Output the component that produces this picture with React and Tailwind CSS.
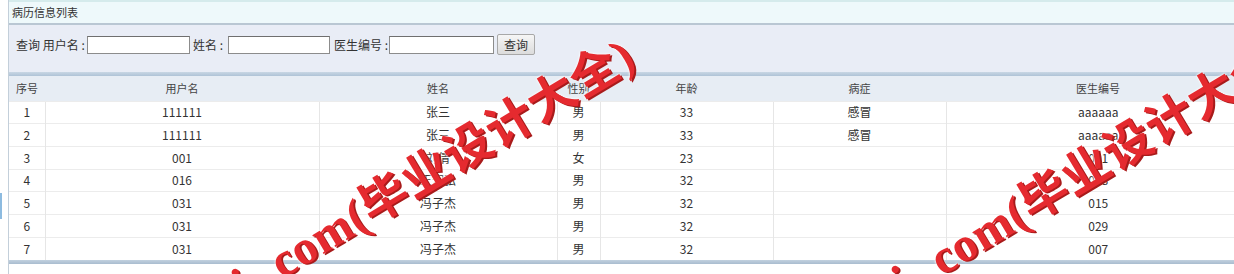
import React from 'react';

const columns = [
  { key: 'id', label: '序号', width: 'w-[36px]' },
  { key: 'user', label: '用户名', width: 'w-[274px]' },
  { key: 'name', label: '姓名', width: 'w-[238px]' },
  { key: 'sex', label: '性别', width: 'w-[43px]' },
  { key: 'age', label: '年龄', width: 'w-[173px]' },
  { key: 'disease', label: '病症', width: 'w-[173px]' },
  { key: 'doctor', label: '医生编号', width: 'w-[304px]' }
];

const rows = [
  { id: 1, user: '111111', name: '张三', sex: '男', age: 33, disease: '感冒', doctor: 'aaaaaa' },
  { id: 2, user: '111111', name: '张三', sex: '男', age: 33, disease: '感冒', doctor: 'aaaaaa' },
  { id: 3, user: '001', name: '刘倩', sex: '女', age: 23, disease: '', doctor: '001' },
  { id: 4, user: '016', name: '王宏弘', sex: '男', age: 32, disease: '', doctor: '008' },
  { id: 5, user: '031', name: '冯子杰', sex: '男', age: 32, disease: '', doctor: '015' },
  { id: 6, user: '031', name: '冯子杰', sex: '男', age: 32, disease: '', doctor: '029' },
  { id: 7, user: '031', name: '冯子杰', sex: '男', age: 32, disease: '', doctor: '007' }
];

const SearchInput = ({ width }) => (
  <input
    type="text"
    className={`${width} shrink-0 h-[18px] bg-white border border-[#8c8c8c] border-t-[#6f6f6f] outline-none`}
  />
);

// red watermark stamped over the table
const Watermark = ({ pos }) => (
  <span
    className={`absolute ${pos} origin-[0_100%] -rotate-[31deg] whitespace-nowrap leading-none text-[48px] tracking-[1px] font-bold text-[#e52a2f] font-['Liberation_Serif','Noto_Sans_CJK_SC',serif] [text-shadow:1px_2px_0_#a81b1b,0_0_2px_#fff,0_0_3px_#fff] pointer-events-none`}
  >
    <span className="absolute right-full bottom-0 pr-[16px]">sj.</span>
    com(毕业设计大全)
  </span>
);

export default function App() {
  return (
    <div className="relative w-[1234px] h-[274px] overflow-hidden bg-white flex font-['Noto_Sans_CJK_SC','Liberation_Sans',sans-serif] text-[#333]">
      <div className="w-[8px] shrink-0 flex flex-col">
        <div className="mt-[193px] w-[2px] h-[26px] bg-[#8dbbe0]" />
      </div>

      <div className="w-[1242px] shrink-0 flex flex-col border-l border-[#c3cfda]">
        <div className="h-[25px] flex items-center pl-[3px] bg-[#eef9fb] border-t-2 border-[#d5ebec] border-b-2 border-b-[#b9c7d3] text-[11px]">
          病历信息列表
        </div>

        <div className="h-[47px] bg-[#e9edf6] flex items-start pt-[9px] pl-[7px] text-[12px]">
          <div className="flex items-center h-[21px]">
            <span className="w-[71px] shrink-0 whitespace-nowrap">查询 用户名 :</span>
            <SearchInput width="w-[103px]" />
            <span className="w-[38px] shrink-0 pl-[3px] whitespace-nowrap">姓名 :</span>
            <SearchInput width="w-[102px]" />
            <span className="w-[59px] shrink-0 pl-[4px] whitespace-nowrap">医生编号 :</span>
            <SearchInput width="w-[105px]" />
            <button className="ml-[3px] w-[38px] h-[21px] rounded-[2px] border border-[#a8a8a8] bg-gradient-to-b from-[#f6f6f6] to-[#dcdcdc] text-[12px] text-[#333]">
              查询
            </button>
          </div>
        </div>

        <div className="h-[4px] bg-gradient-to-b from-[#c9d7e4] to-[#afc3d6]" />

        <table className="table-fixed border-collapse text-[12px]">
          <thead>
            <tr className="h-[25px] bg-[#e7edf4]">
              {columns.map(col => (
                <th key={col.key} className={`${col.width} font-normal text-center text-[11px] text-[#444]`}>
                  {col.label}
                </th>
              ))}
            </tr>
          </thead>
          <tbody>
            {rows.map(row => (
              <tr key={row.id} className="h-[22.7px] bg-white">
                {columns.map(col => (
                  <td
                    key={col.key}
                    className="text-center border-t border-[#ececec] border-l border-l-[#e6e6e6] first:border-l-0 p-0"
                  >
                    {row[col.key]}
                  </td>
                ))}
              </tr>
            ))}
          </tbody>
        </table>

        <div className="h-[4px] bg-gradient-to-b from-[#c2d1df] to-[#a9bccf]" />
      </div>

      <Watermark pos="left-[286px] top-[238px]" />
      <Watermark pos="left-[946px] top-[235px]" />
    </div>
  );
}
